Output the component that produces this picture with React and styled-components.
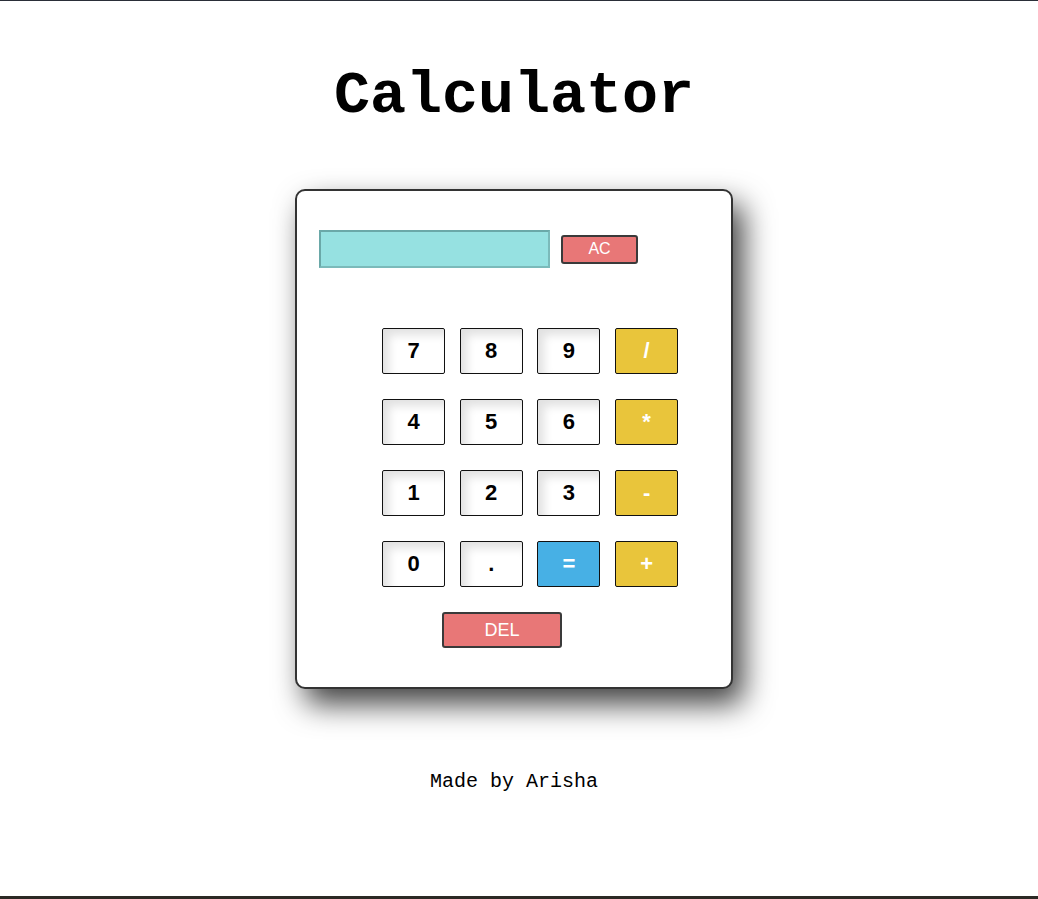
import React, { useState } from "react";
import styled, { createGlobalStyle } from "styled-components";

const GlobalStyle = createGlobalStyle`
  html, body {
    margin: 0;
    padding: 0;
    background: #ffffff;
  }
`;

const Page = styled.div`
  box-sizing: border-box;
  min-height: 100vh;
  padding-right: 10px;
  border-top: 1px solid #2a2e38;
  border-bottom: 3px solid #2b2924;
  display: flex;
  flex-direction: column;
  align-items: center;
`;

const Title = styled.h1`
  margin: 61px 0 0;
  font-family: "Liberation Mono", "Courier New", monospace;
  font-size: 60px;
  font-weight: bold;
  line-height: 68px;
  color: #000;
`;

const Card = styled.div`
  margin-top: 59px;
  width: 438px;
  box-sizing: border-box;
  padding: 39px 22px;
  border: 2px solid #333;
  border-radius: 10px;
  background: #fff;
  box-shadow: 10px 15px 30px rgba(0, 0, 0, 0.75);
`;

const DisplayRow = styled.div`
  display: flex;
  align-items: center;
  gap: 11px;
`;

const Display = styled.input`
  width: 231px;
  height: 38px;
  box-sizing: border-box;
  border: 2px solid #7bbaba;
  border-top-color: #6aa8a8;
  border-left-color: #6aa8a8;
  background: #96e1e1;
  outline: none;
  padding: 0 6px;
  font-family: "Liberation Sans", Arial, sans-serif;
  font-size: 18px;
`;

const RedButton = styled.button`
  box-sizing: border-box;
  width: ${(p) => p.$w}px;
  height: ${(p) => p.$h}px;
  padding: 0;
  border: 2px solid #3a3a3a;
  border-radius: 3px;
  background: #e87777;
  color: #fff;
  font-family: "Liberation Sans", Arial, sans-serif;
  font-size: ${(p) => p.$fs}px;
  cursor: pointer;
`;

const Keypad = styled.div`
  margin: 60px 0 0 63px;
  display: grid;
  grid-template-columns: repeat(4, 63px);
  grid-auto-rows: 46px;
  column-gap: 14.7px;
  row-gap: 25px;
`;

const colors = {
  num: "#ffffff",
  op: "#e9c53b",
  eq: "#47b0e5",
};

const Key = styled.button`
  box-sizing: border-box;
  padding: 0;
  border: 1px solid #111;
  border-radius: 2px;
  background: ${(p) => colors[p.$kind]};
  color: ${(p) => (p.$kind === "num" ? "#000" : "#fff")};
  box-shadow: ${(p) =>
    p.$kind === "num" ? "inset 6px 6px 10px rgba(0, 0, 0, 0.12)" : "none"};
  font-family: "Liberation Sans", Arial, sans-serif;
  font-size: 22px;
  font-weight: bold;
  cursor: pointer;
`;

const DelRow = styled.div`
  margin: 25px 0 0 123px;
`;

const Footer = styled.p`
  margin: 81px 0 0;
  font-family: "Liberation Mono", "Courier New", monospace;
  font-size: 20px;
  color: #000;
`;

const keys = [
  ["7", "num"], ["8", "num"], ["9", "num"], ["/", "op"],
  ["4", "num"], ["5", "num"], ["6", "num"], ["*", "op"],
  ["1", "num"], ["2", "num"], ["3", "num"], ["-", "op"],
  ["0", "num"], [".", "num"], ["=", "eq"], ["+", "op"],
];

export default function App() {
  const [value, setValue] = useState("");

  const press = (k) => {
    if (k === "=") {
      try {
        // eslint-disable-next-line no-new-func
        setValue(String(Function(`return (${value})`)()));
      } catch (e) {
        setValue("Error");
      }
      return;
    }
    setValue((v) => v + k);
  };

  return (
    <>
      <GlobalStyle />
      <Page>
        <Title>Calculator</Title>
        <Card>
          <DisplayRow>
            <Display value={value} readOnly />
            <RedButton $w={77} $h={29} $fs={16} onClick={() => setValue("")}>
              AC
            </RedButton>
          </DisplayRow>
          <Keypad>
            {keys.map(([k, kind]) => (
              <Key key={k} $kind={kind} onClick={() => press(k)}>
                {k}
              </Key>
            ))}
          </Keypad>
          <DelRow>
            <RedButton
              $w={120}
              $h={36}
              $fs={18}
              onClick={() => setValue((v) => v.slice(0, -1))}
            >
              DEL
            </RedButton>
          </DelRow>
        </Card>
        <Footer>Made by Arisha</Footer>
      </Page>
    </>
  );
}
